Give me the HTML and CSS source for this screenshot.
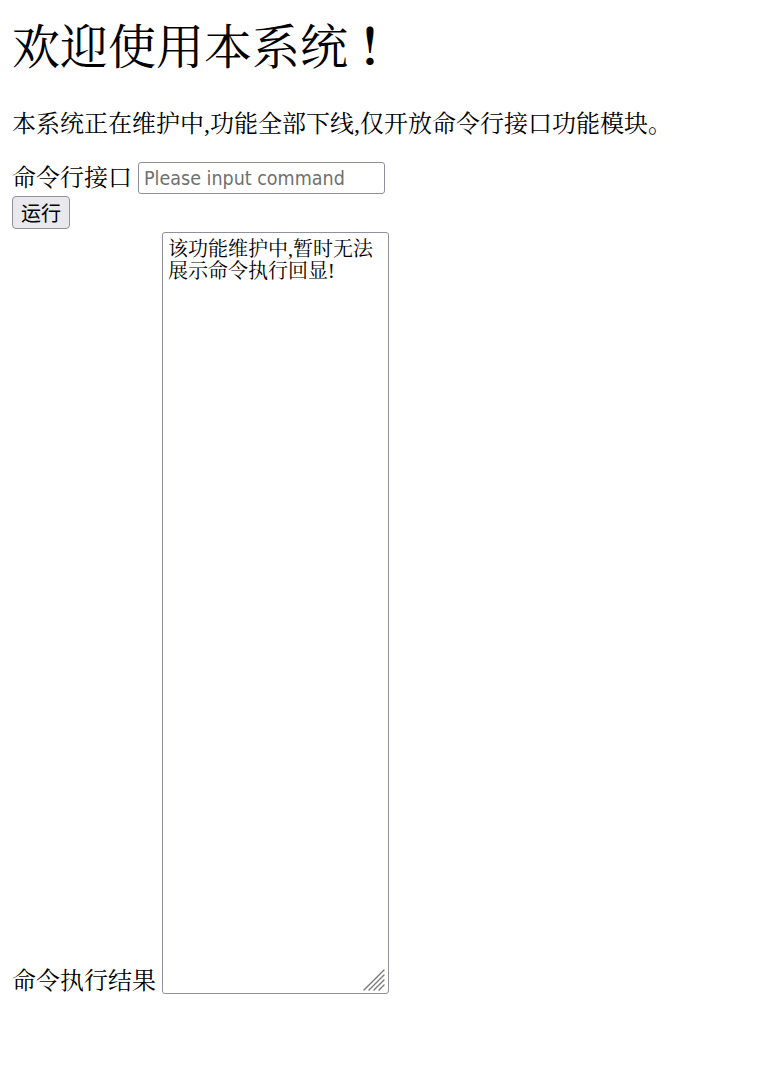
FILE: index.html
```html
<!DOCTYPE html>
<html lang="zh-CN">
<head>
<meta charset="utf-8">
<title>欢迎使用本系统</title>
<link rel="stylesheet" href="styles.css">
</head>
<body>
<div class="page">
  <h1 class="title">欢迎使用本系统<span class="bang">！</span></h1>
  <p class="notice">本系统正在维护中,功能全部下线,仅开放命令行接口功能模块。</p>
  <form class="cmd-form">
    <div class="row row-input">
      <label class="lbl" for="cmd">命令行接口</label>
      <input class="cmd-input" id="cmd" type="text" placeholder="Please input command">
    </div>
    <div class="row-btn">
      <button class="run-btn" type="button">运行</button>
    </div>
    <div class="row row-result">
      <label class="lbl" for="out">命令执行结果</label>
      <div class="ta-wrap">
        <textarea class="result" id="out">该功能维护中,暂时无法展示命令执行回显!</textarea>
        <svg class="grip" width="22" height="22" viewBox="0 0 22 22" aria-hidden="true">
          <g stroke="#7a7a7a" stroke-width="1.4" stroke-linecap="round">
            <line x1="1" y1="21" x2="21" y2="1"/>
            <line x1="6" y1="21" x2="21" y2="6"/>
            <line x1="11" y1="21" x2="21" y2="11"/>
            <line x1="16" y1="21" x2="21" y2="16"/>
          </g>
        </svg>
      </div>
    </div>
  </form>
</div>
</body>
</html>
```
FILE: styles.css
```css
html, body {
  margin: 0;
  padding: 0;
  background: #ffffff;
}

body {
  font-family: "Liberation Serif", "Noto Serif CJK SC", "Noto Sans CJK SC", serif;
  color: #000000;
  font-size: 24px;
}

.page {
  padding: 0 12px;
}

.title {
  margin: 24px 0 0;
  font-size: 48px;
  line-height: 48px;
  font-weight: normal;
  font-family: "Liberation Serif", "Noto Serif CJK SC", "Noto Sans CJK SC", serif;
}

.bang {
  font-weight: bold;
  padding-left: 10px;
}

.notice {
  margin: 40px 0 0;
  font-size: 24px;
  line-height: 24px;
  font-family: "Liberation Serif", "Noto Serif CJK SC", "Noto Sans CJK SC", serif;
}

.cmd-form {
  margin: 26px 0 0;
}

.row {
  display: flex;
  gap: 6px;
}

.row-input {
  align-items: center;
}

.row-result {
  align-items: flex-end;
  margin-top: 3px;
}

.lbl {
  font-size: 24px;
  line-height: 24px;
  font-family: "Liberation Serif", "Noto Serif CJK SC", "Noto Sans CJK SC", serif;
}

.row-result .lbl {
  margin-bottom: 1px;
}

.cmd-input {
  box-sizing: border-box;
  width: 247px;
  height: 32px;
  margin: 0;
  padding: 1px 5px 0;
  border: 1px solid #8f8f9d;
  border-radius: 3px;
  font-family: "DejaVu Sans Condensed", "DejaVu Sans", sans-serif;
  font-stretch: condensed;
  font-size: 19.5px;
  color: #000;
  background: #fff;
  outline: none;
}

.cmd-input::placeholder {
  color: #707070;
  opacity: 1;
}

.row-btn {
  display: flex;
  margin-top: 2px;
}

.run-btn {
  box-sizing: border-box;
  height: 33px;
  margin: 0;
  padding: 0 8px;
  border: 1px solid #8f8f9d;
  border-radius: 4px;
  background: #e9e9ed;
  color: #000;
  font-family: "Noto Sans CJK SC", sans-serif;
  font-size: 20px;
  line-height: 31px;
}

.ta-wrap {
  position: relative;
  display: flex;
}

.result {
  box-sizing: border-box;
  width: 227px;
  height: 762px;
  margin: 0;
  padding: 5px 4px 3px 5px;
  border: 1px solid #8f8f9d;
  border-radius: 3px;
  resize: none;
  font-family: "Liberation Serif", "Noto Serif CJK SC", "Noto Sans CJK SC", serif;
  font-size: 20px;
  line-height: 22px;
  color: #000;
  background: #fff;
  outline: none;
  overflow: hidden;
}

.grip {
  position: absolute;
  right: 4px;
  bottom: 3px;
}
```
